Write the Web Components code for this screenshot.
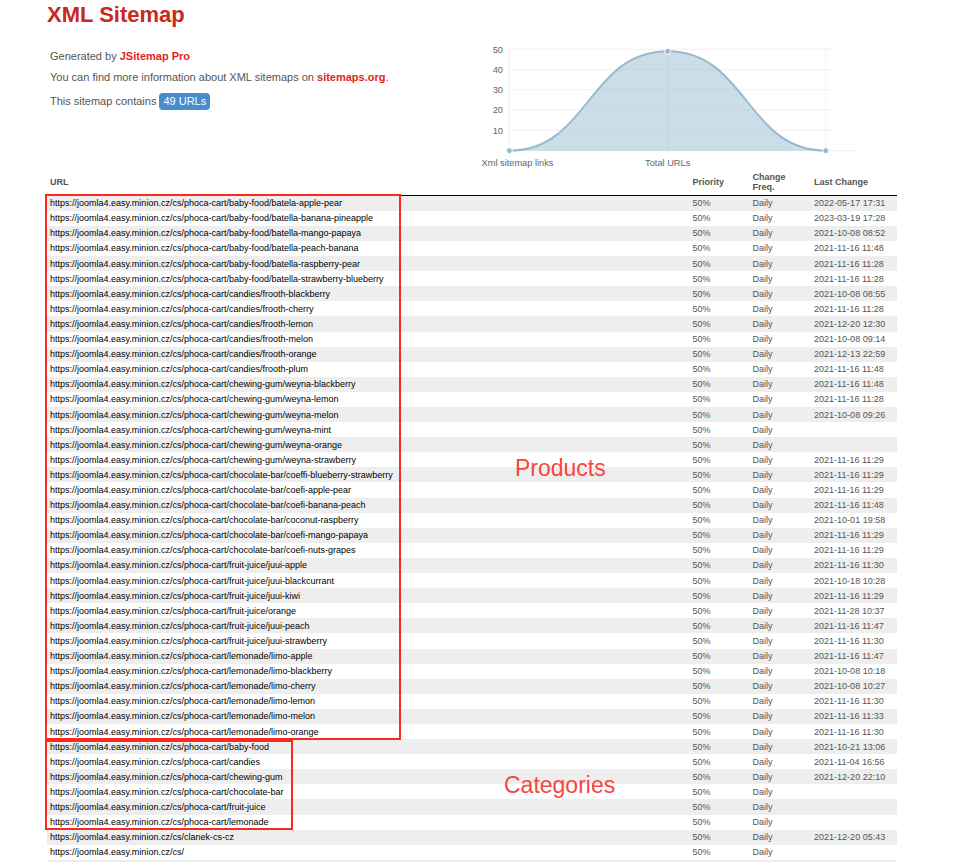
<!DOCTYPE html>
<html><head><meta charset="utf-8"><style>
html,body{margin:0;padding:0;background:#fff}
body{font-family:"Liberation Sans",Arial,sans-serif;overflow:hidden;height:862px}
</style></head><body>
<sitemap-page></sitemap-page>
<script>
const P='https://joomla4.easy.minion.cz/cs/phoca-cart/';
const B='https://joomla4.easy.minion.cz/cs/';
const rows=[
['baby-food/batela-apple-pear','2022-05-17 17:31'],['baby-food/batella-banana-pineapple','2023-03-19 17:28'],['baby-food/batella-mango-papaya','2021-10-08 08:52'],['baby-food/batella-peach-banana','2021-11-16 11:48'],['baby-food/batella-raspberry-pear','2021-11-16 11:28'],['baby-food/batella-strawberry-blueberry','2021-11-16 11:28'],
['candies/frooth-blackberry','2021-10-08 08:55'],['candies/frooth-cherry','2021-11-16 11:28'],['candies/frooth-lemon','2021-12-20 12:30'],['candies/frooth-melon','2021-10-08 09:14'],['candies/frooth-orange','2021-12-13 22:59'],['candies/frooth-plum','2021-11-16 11:48'],
['chewing-gum/weyna-blackberry','2021-11-16 11:48'],['chewing-gum/weyna-lemon','2021-11-16 11:28'],['chewing-gum/weyna-melon','2021-10-08 09:26'],['chewing-gum/weyna-mint',''],['chewing-gum/weyna-orange',''],['chewing-gum/weyna-strawberry','2021-11-16 11:29'],
['chocolate-bar/coeffi-blueberry-strawberry','2021-11-16 11:29'],['chocolate-bar/coefi-apple-pear','2021-11-16 11:29'],['chocolate-bar/coefi-banana-peach','2021-11-16 11:48'],['chocolate-bar/coconut-raspberry','2021-10-01 19:58'],['chocolate-bar/coefi-mango-papaya','2021-11-16 11:29'],['chocolate-bar/coefi-nuts-grapes','2021-11-16 11:29'],
['fruit-juice/juui-apple','2021-11-16 11:30'],['fruit-juice/juui-blackcurrant','2021-10-18 10:28'],['fruit-juice/juui-kiwi','2021-11-16 11:29'],['fruit-juice/orange','2021-11-28 10:37'],['fruit-juice/juui-peach','2021-11-16 11:47'],['fruit-juice/juui-strawberry','2021-11-16 11:30'],
['lemonade/limo-apple','2021-11-16 11:47'],['lemonade/limo-blackberry','2021-10-08 10:18'],['lemonade/limo-cherry','2021-10-08 10:27'],['lemonade/limo-lemon','2021-11-16 11:30'],['lemonade/limo-melon','2021-11-16 11:33'],['lemonade/limo-orange','2021-11-16 11:30'],
['baby-food','2021-10-21 13:06'],['candies','2021-11-04 16:56'],['chewing-gum','2021-12-20 22:10'],['chocolate-bar',''],['fruit-juice',''],['lemonade','']
].map(r=>[P+r[0],r[1]]);
rows.push([B+'clanek-cs-cz','2021-12-20 05:43'],[B,'']);

class UrlRow extends HTMLElement{
  connectedCallback(){ if(this.shadowRoot) return; const s=this.attachShadow({mode:'open'});
  s.innerHTML=`<style>
  :host{display:grid;grid-template-columns:642.6px 60px 61.5px 1fr;grid-template-rows:15.094px;height:15.094px;line-height:14px;font-size:9px;color:#555;white-space:nowrap;padding-left:3px}
  :host([odd]){background:#eee}
  span{padding-top:.5px}
  .u{color:#000}
  </style><span class="u"></span><span>50%</span><span>Daily</span><span class="d"></span>`;
  s.querySelector('.u').textContent=this.getAttribute('url');
  s.querySelector('.d').textContent=this.getAttribute('date')||'';}
}
customElements.define('url-row',UrlRow);

class SitemapChart extends HTMLElement{
  constructor(){super();this.attachShadow({mode:'open'}).innerHTML=`<style>
  :host{display:block;width:410px;height:135px;flex:none}
  svg{display:block;font:9.25px "Liberation Sans",Arial,sans-serif;fill:#666}
  </style>
  <svg width="410" height="135" viewBox="450 35 410 135">
  <g stroke="#f1f1f1" stroke-width="1" fill="none">
   <path d="M509.3 49.3H832M509.3 69.5H832M509.3 89.8H832M509.3 110H832M509.3 130.3H832M509.3 150.7H857"/>
   <path d="M509.3 46V154M667.7 46V154M825.7 46V154"/>
  </g>
  <path d="M509.3 150.7C588.5 150.7 588.5 51.3 667.7 51.3C746.7 51.3 746.7 150.7 825.7 150.7Z" fill="rgba(151,187,205,.5)"/>
  <path d="M509.3 150.7C588.5 150.7 588.5 51.3 667.7 51.3C746.7 51.3 746.7 150.7 825.7 150.7" fill="none" stroke="#97bbcd" stroke-width="2"/>
  <g fill="#97bbcd" stroke="#fff" stroke-width="1"><circle cx="509.3" cy="150.7" r="3"/><circle cx="667.7" cy="51.3" r="3"/><circle cx="825.7" cy="150.7" r="3"/></g>
  <g text-anchor="end"><text x="503" y="52.5">50</text><text x="503" y="72.7">40</text><text x="503" y="93">30</text><text x="503" y="113.2">20</text><text x="503" y="133.5">10</text></g>
  <g text-anchor="middle"><text x="517.5" y="166">Xml sitemap links</text><text x="667.7" y="166">Total URLs</text></g>
  </svg>`;}
}
customElements.define('sitemap-chart',SitemapChart);

class SitemapIntro extends HTMLElement{
  constructor(){super();this.attachShadow({mode:'open'}).innerHTML=`<style>
  :host{display:block;width:400px;flex:none;padding:14px 0 0 3px;font-size:11px;color:#555}
  p{margin:0;height:23px;line-height:15px}
  p:first-child{height:23.3px}
  p:nth-child(3){margin-top:-2.3px}
  a{color:#e0261c;font-weight:bold;text-decoration:none}
  .b{display:inline-block;background:#478dcb;color:#fff;font-weight:500;border-radius:4px;padding:0 4px;line-height:17px;height:17px}
  </style>
  <p>Generated by <a>JSitemap Pro</a></p>
  <p>You can find more information about XML sitemaps on <a>sitemaps.org</a>.</p>
  <p>This sitemap contains <span class="b">49 URLs</span></p>`;}
}
customElements.define('sitemap-intro',SitemapIntro);

class SitemapPage extends HTMLElement{
  constructor(){super();const s=this.attachShadow({mode:'open'});
  s.innerHTML=`<style>
  :host{display:block;position:relative;width:958px;height:862px;overflow:hidden}
  .wrap{margin-left:47px;width:850px}
  h1{margin:0;font-size:22px;line-height:30px;color:#c9281c;font-weight:bold;height:35px}
  .top{display:flex;height:135px}
  .head{display:grid;grid-template-columns:642.6px 60px 61.5px 1fr;align-items:center;height:24.703px;padding-left:3px;font-size:9px;font-weight:bold;color:#555;line-height:10px;border-bottom:1px solid #000}
  .mark{position:absolute;border:2px solid #fb2a1f;box-sizing:border-box}
  .note{position:absolute;color:#fb4540;font-size:23px;line-height:26px}
  </style>
  <div class="wrap"><h1>XML Sitemap</h1>
  <div class="top"><sitemap-intro></sitemap-intro><sitemap-chart></sitemap-chart></div>
  <div class="head"><span>URL</span><span>Priority</span><span>Change<br>Freq.</span><span>Last Change</span></div>
  <div id="rows"></div></div>
  <div class="mark" style="left:44.5px;top:194px;width:356px;height:546px"></div>
  <div class="mark" style="left:44.5px;top:739.5px;width:248px;height:90px"></div>
  <div class="note" style="left:515px;top:455px">Products</div>
  <div class="note" style="left:504px;top:772px">Categories</div>`;
  const h=s.getElementById('rows');
  rows.forEach((r,i)=>{const e=document.createElement('url-row');e.setAttribute('url',r[0]);e.setAttribute('date',r[1]);if(i%2==0)e.setAttribute('odd','');if(i==20)e.style.height='15.13px';h.appendChild(e);});
  const e=document.createElement('div');e.style.cssText='height:15px;background:#eee';h.appendChild(e);
  }
}
customElements.define('sitemap-page',SitemapPage);
</script>
</body></html>
